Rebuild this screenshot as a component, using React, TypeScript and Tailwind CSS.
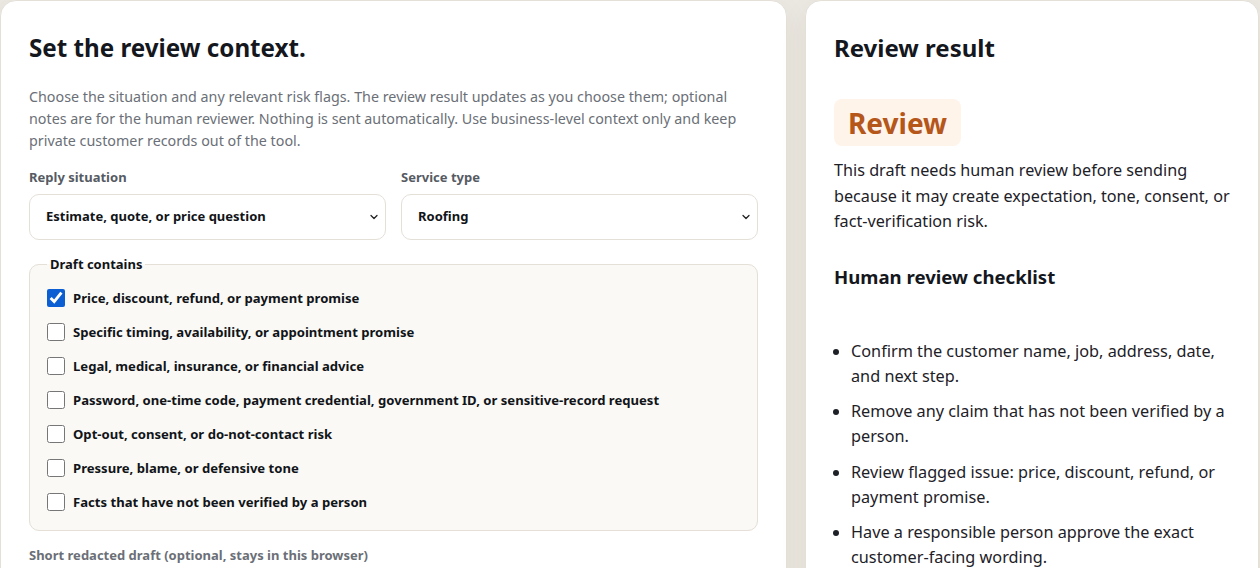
import { ChevronDown } from "lucide-react";

const flags = [
  { label: "Price, discount, refund, or payment promise", checked: true },
  { label: "Specific timing, availability, or appointment promise" },
  { label: "Legal, medical, insurance, or financial advice" },
  { label: "Password, one-time code, payment credential, government ID, or sensitive-record request" },
  { label: "Opt-out, consent, or do-not-contact risk" },
  { label: "Pressure, blame, or defensive tone" },
  { label: "Facts that have not been verified by a person" },
];

const checklist = [
  "Confirm the customer name, job, address, date, and next step.",
  "Remove any claim that has not been verified by a person.",
  "Review flagged issue: price, discount, refund, or payment promise.",
  "Have a responsible person approve the exact customer-facing wording.",
  "Keep private customer records out of the draft before sending.",
];

const Select = ({ label, value, options }: { label: string; value: string; options: string[] }) => (
  <label className="flex flex-col gap-2">
    <span className="text-[13px] font-bold leading-[18px] text-[#565b63]">{label}</span>
    <div className="relative">
      <select
        defaultValue={value}
        className="w-full h-[46px] appearance-none rounded-[10px] border border-[#e4e0d8] bg-white pl-4 pr-10 text-[13px] font-bold text-[#111418] outline-none"
      >
        {options.map((o) => (
          <option key={o}>{o}</option>
        ))}
      </select>
      <ChevronDown className="absolute right-[6px] top-[17px] pointer-events-none text-[#222]" size={12} strokeWidth={2.5} />
    </div>
  </label>
);

export default function App() {
  return (
    <div className="min-h-screen bg-[#ebe8e1] font-['Noto_Sans',sans-serif] pr-px">
      <div className="grid grid-cols-[787px_1fr] gap-[18px] items-start">
        {/* Context form */}
        <section className="rounded-[16px] border border-[#e4e0d8] bg-white px-[28px] pt-[31px] pb-10 shadow-[0_10px_30px_rgba(60,50,30,0.06)]">
          <h2 className="text-[24.2px] font-bold leading-[31px] text-[#14171d]">Set the review context.</h2>
          <p className="mt-[23px] text-[14.3px] leading-[22px] text-[#6b6f77]">
            Choose the situation and any relevant risk flags. The review result updates as you choose them; optional
            notes are for the human reviewer. Nothing is sent automatically. Use business-level context only and keep
            private customer records out of the tool.
          </p>

          <div className="mt-4 grid grid-cols-2 gap-[15px]">
            <Select
              label="Reply situation"
              value="Estimate, quote, or price question"
              options={["Estimate, quote, or price question", "Scheduling or availability", "Complaint or service issue"]}
            />
            <Select label="Service type" value="Roofing" options={["Roofing", "Plumbing", "HVAC", "Electrical"]} />
          </div>

          <fieldset className="mt-[15px] rounded-[10px] border border-[#e4e0d8] bg-[#faf9f6] px-[17px] pt-[16px] pb-[19px]">
            <legend className="px-[3px] text-[13px] font-bold leading-[18px] text-[#111418]">Draft contains</legend>
            <div className="flex flex-col gap-4">
              {flags.map((f) => (
                <label key={f.label} className="flex items-center gap-2 h-[18px]">
                  <input
                    type="checkbox"
                    defaultChecked={f.checked}
                    className="m-0 h-[18px] w-[18px] shrink-0 accent-[#0b5fd3]"
                  />
                  <span className="text-[13.1px] font-bold leading-[18px] text-[#111418]">{f.label}</span>
                </label>
              ))}
            </div>
          </fieldset>

          <label className="mt-[15px] flex flex-col gap-2">
            <span className="text-[13px] font-bold leading-[18px] text-[#6b6f77]">
              Short redacted draft (optional, stays in this browser)
            </span>
            <textarea
              rows={5}
              className="w-full rounded-[10px] border border-[#e4e0d8] bg-white p-4 text-[14px] outline-none resize-none"
            />
          </label>
        </section>

        {/* Result */}
        <aside className="rounded-[16px] border border-[#e4e0d8] bg-white pl-[28px] pr-[21px] pt-[31px] pb-10 shadow-[0_10px_30px_rgba(60,50,30,0.06)]">
          <h2 className="text-[24px] font-bold leading-[31px] text-[#14171d]">Review result</h2>
          <div className="mt-[36px] inline-flex h-[47px] items-center rounded-[8px] bg-[#fff4ea] px-[14px]">
            <span className="text-[28px] font-bold leading-none text-[#b5561a]">Review</span>
          </div>
          <p className="mt-[12px] text-[16.2px] leading-[25.5px] text-[#1d2127]">
            This draft needs human review before sending because it may create expectation, tone, consent, or
            fact-verification risk.
          </p>
          <h3 className="mt-[29px] text-[18.6px] font-bold leading-[26px] text-[#14171d]">Human review checklist</h3>
          <ul className="mt-[49px] list-disc pl-[17px] flex flex-col gap-[10.5px] marker:text-[#1d2127]">
            {checklist.map((c) => (
              <li key={c} className="text-[16.25px] leading-[25px] text-[#1d2127]">
                {c}
              </li>
            ))}
          </ul>
        </aside>
      </div>
    </div>
  );
}
